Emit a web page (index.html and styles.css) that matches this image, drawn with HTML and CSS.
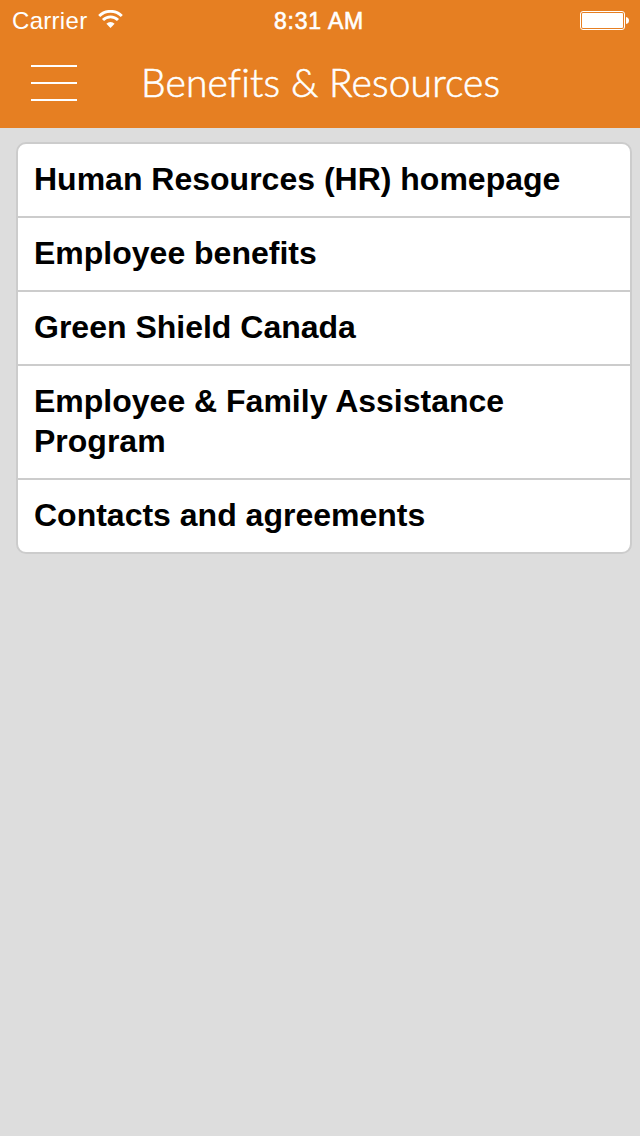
FILE: index.html
```
<!DOCTYPE html>
<html lang="en">
<head>
    <meta charset="UTF-8">
    <title>Benefits &amp; Resources</title>
    <link rel="stylesheet" href="styles.css">
</head>
<body>

    <header>
        <div class="status">
            <div class="network">
                <span class="carrier">Carrier</span>
                <svg class="wifi" width="25" height="19" viewBox="0 0 25 19">
                    <path d="M1.2 6 A16 16 0 0 1 23.8 6 M5 10 A10.6 10.6 0 0 1 20 10" fill="none" stroke="#fff" stroke-width="2.9"/>
                    <path d="M8.4 13.8 A5.8 5.8 0 0 1 16.6 13.8 L12.5 18 Z" fill="#fff"/>
                </svg>
            </div>
            <span class="time">8:31 AM</span>
            <svg class="battery" width="50" height="20" viewBox="0 0 50 20">
                <rect x="0.5" y="0.5" width="44" height="18" rx="2.5" fill="none" stroke="#fff"/>
                <rect x="2" y="2" width="41" height="15" rx="1" fill="#fff"/>
                <path d="M46 6 Q49 6.5 49 9.5 Q49 12.5 46 13 Z" fill="#fff"/>
            </svg>
        </div>
        <div class="nav">
            <div class="menu"><i></i><i></i><i></i></div>
            <h1>Benefits &amp; Resources</h1>
        </div>
    </header>

    <ul class="list">
        <li>Human Resources (HR) homepage</li>
        <li>Employee benefits</li>
        <li>Green Shield Canada</li>
        <li>Employee &amp; Family Assistance Program</li>
        <li>Contacts and agreements</li>
    </ul>

</body>
</html>
```

FILE: styles.css
```
body {
    margin: 0;
    background-color: #ddd;
    font-family: "Liberation Sans", Arial, sans-serif;
}

header {
    height: 128px;
    background-color: #e67f22;
    color: #fff;
}

.status {
    display: grid;
    grid-template-columns: 1fr auto 1fr;
    height: 40px;
    padding: 0 10px 0 12px;
    font-size: 24px;
    line-height: 42px;
}

.network {
    display: flex;
}

.carrier {
    width: 75px;
    letter-spacing: 0.3px;
}

.wifi {
    margin: 10px 0 0 11px;
}

.time {
    margin-right: 4px;
    font-size: 23px;
    letter-spacing: 0.8px;
    -webkit-text-stroke: 0.6px #fff;
}

.battery {
    justify-self: end;
    margin-top: 11px;
}

.nav {
    display: flex;
    height: 88px;
    padding-left: 31px;
}

.menu {
    display: flex;
    flex-direction: column;
    gap: 15px;
    width: 46px;
    padding-top: 25px;
}

.menu i {
    height: 2px;
    background-color: #fff;
}

h1 {
    margin: 0 0 0 64px;
    font-family: Lato, sans-serif;
    font-size: 39px;
    font-weight: 300;
    letter-spacing: 0.12px;
    line-height: 84px;
    white-space: nowrap;
    -webkit-text-stroke: 0.6px #fff;
}

.list {
    margin: 14px 8px 0 16px;
    padding: 0;
    list-style: none;
    background-color: #fff;
    border: 2px solid #ccc;
    border-radius: 10px;
}

.list li {
    padding: 15px 16px 17px;
    font-size: 32px;
    font-weight: bold;
    line-height: 40px;
}

.list li + li {
    border-top: 2px solid #ccc;
}
```
